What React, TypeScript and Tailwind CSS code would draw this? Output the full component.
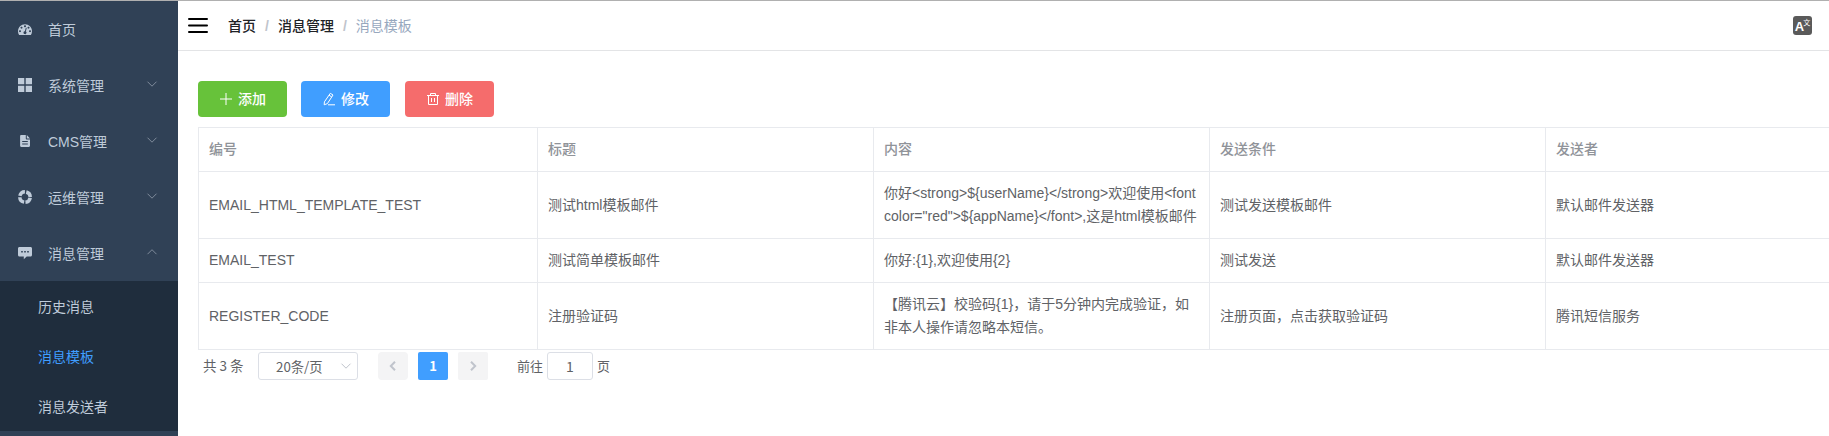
import type { ReactNode } from 'react';

const DASHBOARD_PATH =
  'M27.429 63.638c0-2.508-.893-4.65-2.679-6.424-1.786-1.775-3.94-2.662-6.464-2.662-2.524 0-4.679.887-6.465 2.662-1.785 1.774-2.678 3.916-2.678 6.424 0 2.508.893 4.65 2.678 6.424 1.786 1.775 3.94 2.662 6.465 2.662 2.524 0 4.678-.887 6.464-2.662 1.786-1.775 2.679-3.916 2.679-6.424zm13.714-31.801c0-2.508-.893-4.65-2.679-6.424-1.785-1.775-3.94-2.662-6.464-2.662-2.524 0-4.679.887-6.464 2.662-1.786 1.774-2.679 3.916-2.679 6.424 0 2.508.893 4.65 2.679 6.424 1.785 1.774 3.94 2.662 6.464 2.662 2.524 0 4.679-.888 6.464-2.662 1.786-1.775 2.679-3.916 2.679-6.424zM71.714 65.98l7.215-27.116c.285-1.23.107-2.378-.536-3.443-.643-1.064-1.56-1.762-2.75-2.094-1.19-.33-2.333-.177-3.429.462-1.095.639-1.81 1.573-2.143 2.804l-7.214 27.116c-2.857.237-5.405 1.266-7.643 3.088-2.238 1.822-3.738 4.152-4.5 6.992-.952 3.644-.476 7.098 1.429 10.364 1.905 3.265 4.69 5.37 8.357 6.317 3.667.947 7.143.474 10.429-1.42 3.285-1.892 5.404-4.66 6.357-8.305.762-2.84.619-5.607-.429-8.305-1.047-2.697-2.762-4.85-5.143-6.46zm47.143-2.342c0-2.508-.893-4.65-2.678-6.424-1.786-1.775-3.94-2.662-6.465-2.662-2.524 0-4.678.887-6.464 2.662-1.786 1.774-2.679 3.916-2.679 6.424 0 2.508.893 4.65 2.679 6.424 1.786 1.775 3.94 2.662 6.464 2.662 2.524 0 4.679-.887 6.465-2.662 1.785-1.775 2.678-3.916 2.678-6.424zm-45.714-45.43c0-2.509-.893-4.65-2.679-6.425C68.68 10.01 66.524 9.122 64 9.122c-2.524 0-4.679.887-6.464 2.661-1.786 1.775-2.679 3.916-2.679 6.425 0 2.508.893 4.65 2.679 6.424 1.785 1.774 3.94 2.662 6.464 2.662 2.524 0 4.679-.888 6.464-2.662 1.786-1.775 2.679-3.916 2.679-6.424zm32 13.629c0-2.508-.893-4.65-2.679-6.424-1.785-1.775-3.94-2.662-6.464-2.662-2.524 0-4.679.887-6.464 2.662-1.786 1.774-2.679 3.916-2.679 6.424 0 2.508.893 4.65 2.679 6.424 1.785 1.774 3.94 2.662 6.464 2.662 2.524 0 4.679-.888 6.464-2.662 1.786-1.775 2.679-3.916 2.679-6.424zM128 63.638c0 12.351-3.357 23.78-10.071 34.286-.905 1.372-2.19 2.058-3.858 2.058H13.93c-1.667 0-2.953-.686-3.858-2.058C3.357 87.465 0 76.037 0 63.638c0-8.613 1.69-16.847 5.071-24.703C8.452 31.08 13 24.312 18.714 18.634c5.715-5.68 12.524-10.199 20.429-13.559C47.048 1.715 55.333.035 64 .035c8.667 0 16.952 1.68 24.857 5.04 7.905 3.36 14.714 7.88 20.429 13.559 5.714 5.678 10.262 12.446 13.643 20.301 3.38 7.856 5.071 16.09 5.071 24.703z';

const icons: Record<string, ReactNode> = {
  home: (
    <svg className="h-3.5 w-3.5" viewBox="0 -20 128 128" fill="currentColor">
      <path d={DASHBOARD_PATH} />
    </svg>
  ),
  grid: (
    <svg className="h-3.5 w-3.5" viewBox="0 0 14 14" fill="currentColor">
      <path d="M0 0h6.3v6.3H0zM7.7 0H14v6.3H7.7zM0 7.7h6.3V14H0zM7.7 7.7H14V14H7.7z" />
    </svg>
  ),
  doc: (
    <svg className="h-3.5 w-3.5" viewBox="0 0 14 14" fill="currentColor">
      <path
        fillRule="evenodd"
        d="M3.3 1h4.5v3.6c0 .6.3.9.9.9H12v6.3c0 .7-.5 1.2-1.200 1.200H3.300C2.600 13 2.100 12.500 2.100 11.800V2.200C2.100 1.500 2.600 1 3.300 1zM4.200 6.900v1h5.600v-1zM4.200 9.500v1h5.600v-1zM8.800 1l3.200 3.500H8.800z"
      />
    </svg>
  ),
  ring: (
    <svg className="h-3.5 w-3.5" viewBox="0 0 14 14" fill="none" stroke="currentColor">
      <circle cx="7" cy="7" r="5.2" strokeWidth="3.5" strokeDasharray="6.768 1.400" strokeDashoffset="-0.7" />
    </svg>
  ),
  message: (
    <svg className="h-3.5 w-3.5" viewBox="0 0 14 14" fill="currentColor">
      <path
        fillRule="evenodd"
        d="M1.500 1h11c.9 0 1.500.6 1.500 1.500v6.400c0 .9-.6 1.500-1.500 1.500H8.700L5.800 13.200v-2.800H1.500C.6 10.400 0 9.800 0 8.900V2.500C0 1.600.6 1 1.500 1zM3.200 4.900v1.600h1.600V4.900zM6.200 4.900v1.600h1.600V4.900zM9.200 4.900v1.600h1.600V4.900z"
      />
    </svg>
  ),
};

function Chevron({ className, d }: { className: string; d: string }) {
  return (
    <svg className={className} viewBox="0 0 12 12" fill="none" stroke="currentColor">
      <path d={d} />
    </svg>
  );
}

const DOWN = 'M1.500 3.700 6 8.200 10.500 3.700';
const UP = 'M1.500 8.200 6 3.700 10.500 8.200';
const LEFT = 'M8 1.800 3.800 6 8 10.200';
const RIGHT = 'M4 1.800 8.200 6 4 10.200';

const menu = [
  { icon: 'home', label: '首页', arrow: '' },
  { icon: 'grid', label: '系统管理', arrow: DOWN },
  { icon: 'doc', label: 'CMS管理', arrow: DOWN },
  { icon: 'ring', label: '运维管理', arrow: DOWN },
  { icon: 'message', label: '消息管理', arrow: UP },
];

const submenu = ['历史消息', '消息模板', '消息发送者'];

function Sidebar() {
  return (
    <aside className="w-[178px] shrink-0 bg-[#304156] text-[#bfcbd9]">
      {menu.map((m) => (
        <div key={m.label} className="flex h-14 items-center pr-5 pl-[18px]">
          {icons[m.icon]}
          <span className="ml-4 pt-0.5">{m.label}</span>
          {m.arrow && <Chevron className="mb-0.5 ml-auto h-3 w-3 text-[#7f8b9b]" d={m.arrow} />}
        </div>
      ))}
      <div className="bg-[#1f2d3d]">
        {submenu.map((s) => (
          <div
            key={s}
            className={
              s === '消息模板'
                ? 'flex h-[50px] items-center pt-0.5 pl-[38px] text-[#409eff]'
                : 'flex h-[50px] items-center pt-0.5 pl-[38px]'
            }
          >
            {s}
          </div>
        ))}
      </div>
    </aside>
  );
}

function Navbar() {
  return (
    <header className="flex h-[50px] items-center border-b border-[#e3e4e6] pr-[17px] pl-[10px]">
      <svg className="h-5 w-5 text-black" viewBox="0 0 20 20" stroke="currentColor" strokeWidth="2" strokeLinecap="round">
        <path d="M1 3h18M1 9.500h18M1 16h18" />
      </svg>
      <nav className="ml-5 flex items-center">
        <span className="font-medium text-[#202226]">首页</span>
        <span className="mr-[9px] ml-[9px] font-bold text-[#c0c4cc]">/</span>
        <span className="font-medium text-[#202226]">消息管理</span>
        <span className="mr-[9px] ml-[9px] font-bold text-[#c0c4cc]">/</span>
        <span className="text-[#97a8be]">消息模板</span>
      </nav>
      <div className="ml-auto flex h-[19px] w-[19px] justify-center rounded-[3px] bg-[#5a5a5a] font-bold text-white">
        <span className="text-[13px] leading-[22px]">A</span>
        <span className="-ml-px text-[7px] leading-[13px] font-normal">文</span>
      </div>
    </header>
  );
}

const buttons = [
  {
    label: '添加',
    cls: 'bg-[#67c23a] mr-[14px]',
    icon: <path d="M7 1v12M1 7h12" />,
  },
  {
    label: '修改',
    cls: 'bg-[#409eff] mr-[15px]',
    icon: <path d="M8.300 1.300 11 3 5.400 11.600 2.200 12.800 2.400 9.900zM7 3.200l2.700 1.700M6 12.800h7" />,
  },
  {
    label: '删除',
    cls: 'bg-[#f56c6c]',
    icon: <path d="M1 3.500h12M4.500 3.500V1.500h5v2M2.500 3.500V12.500h9V3.500M5.500 6v4M8.500 6v4" />,
  },
];

const columns = ['编号', '标题', '内容', '发送条件', '发送者'];

const rows = [
  [
    'EMAIL_HTML_TEMPLATE_TEST',
    '测试html模板邮件',
    '你好<strong>${userName}</strong>欢迎使用<font color="red">${appName}</font>,这是html模板邮件',
    '测试发送模板邮件',
    '默认邮件发送器',
  ],
  ['EMAIL_TEST', '测试简单模板邮件', '你好:{1},欢迎使用{2}', '测试发送', '默认邮件发送器'],
  [
    'REGISTER_CODE',
    '注册验证码',
    '【腾讯云】校验码{1}，请于5分钟内完成验证，如非本人操作请忽略本短信。',
    '注册页面，点击获取验证码',
    '腾讯短信服务',
  ],
];

function Table() {
  return (
    <table className="w-[1684px] table-fixed border-separate border-spacing-0 border-t border-l border-[#e8eaee] text-left leading-[23px]">
      <colgroup>
        <col className="w-[339px]" />
        <col className="w-[336px]" />
        <col className="w-[336px]" />
        <col className="w-[336px]" />
        <col className="w-[336px]" />
      </colgroup>
      <thead>
        <tr>
          {columns.map((c) => (
            <th key={c} className="border-r border-b border-[#e8eaee] px-2.5 py-2.5 font-medium text-[#909399]">
              {c}
            </th>
          ))}
        </tr>
      </thead>
      <tbody>
        {rows.map((r) => (
          <tr key={r[0]}>
            {r.map((c, i) => (
              <td key={i} className="border-r border-b border-[#e8eaee] px-2.5 py-2.5 text-[#606266]">
                {c}
              </td>
            ))}
          </tr>
        ))}
      </tbody>
    </table>
  );
}

function Pagination() {
  return (
    <div className="mt-0.5 flex h-7 items-center pl-[5px] font-['Noto_Sans_CJK_SC',sans-serif] text-[13px] text-[#606266]">
      <span className="w-[55px] text-[13.500px] whitespace-nowrap">共 3 条</span>
      <div className="flex h-7 w-[100px] items-center rounded-[3px] border border-[#dcdfe6] pr-[5px] pl-[17px]">
        <span className="text-[13.300px]">20条/页</span>
        <Chevron className="ml-auto h-3 w-3 text-[#c0c4cc]" d={DOWN} />
      </div>
      <div className="ml-5 flex h-7 w-[30px] items-center justify-center rounded-sm bg-[#f4f4f5] text-[#c0c4cc]">
        <Chevron className="h-3 w-3 stroke-2" d={LEFT} />
      </div>
      <div className="ml-2.5 flex h-7 w-[30px] items-center justify-center rounded-xs bg-[#409eff] font-bold text-white">1</div>
      <div className="ml-2.5 flex h-7 w-[30px] items-center justify-center rounded-xs bg-[#f4f4f5] text-[#c0c4cc]">
        <Chevron className="h-3 w-3 stroke-2" d={RIGHT} />
      </div>
      <span className="ml-[29px] w-[30px]">前往</span>
      <div className="flex h-7 w-[46px] items-center justify-center rounded-[3px] border border-[#dcdfe6] text-sm">1</div>
      <span className="ml-1">页</span>
    </div>
  );
}

export default function App() {
  return (
    <div className="flex h-[436px] w-[1829px] overflow-hidden border-t border-[#b0b0b0] bg-white font-['Liberation_Sans','Noto_Sans_CJK_SC',sans-serif] text-sm">
      <Sidebar />
      <div className="min-w-0 flex-1">
        <Navbar />
        <main className="pt-[30px] pl-5">
          <div className="mb-2.5 flex">
            {buttons.map((b) => (
              <button
                key={b.label}
                className={`flex h-9 w-[89px] items-center justify-center gap-[5px] rounded-[4px] font-medium text-white ${b.cls}`}
              >
                <svg className="h-3.5 w-3.5" viewBox="0 0 14 14" fill="none" stroke="currentColor">
                  {b.icon}
                </svg>
                {b.label}
              </button>
            ))}
          </div>
          <Table />
          <Pagination />
        </main>
      </div>
    </div>
  );
}
